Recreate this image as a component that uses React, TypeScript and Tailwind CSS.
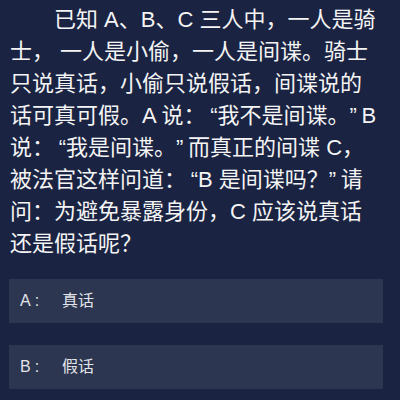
import React from 'react';

// Curly quotes get a fixed cell so spacing matches the screenshot.
const L = () => <span className="inline-block w-[12px] text-right">“</span>;
const R = () => <span className="inline-block w-[12px] text-left">”</span>;

const lines: React.ReactNode[] = [
  <>已知 A、B、C 三人中，一人是骑</>,
  <>士， 一人是小偷，一人是间谍。骑士</>,
  <>只说真话，小偷只说假话，间谍说的</>,
  <>话可真可假。A 说：<L />我不是间谍。<R />B</>,
  <>说：<L />我是间谍。<R />而真正的间谍 C，</>,
  <>被法官这样问道：<L />B 是间谍吗？<R />请</>,
  <>问：为避免暴露身份，C 应该说真话</>,
  <>还是假话呢？</>,
];

const options = [
  { key: 'A', text: '真话' },
  { key: 'B', text: '假话' },
];

export default function App() {
  return (
    <div
      lang="zh-CN"
      className="w-[400px] h-[400px] overflow-hidden bg-[#1a2342] font-['Liberation_Sans','Noto_Sans_CJK_SC',sans-serif]"
    >
      <div className="pl-[10px] pt-[4px] text-[22px] leading-[32px] text-[#f4f4f4] whitespace-nowrap">
        {lines.map((l, i) => (
          <div key={i} className={i === 0 ? 'pl-[44px]' : ''}>
            {l}
          </div>
        ))}
      </div>
      <div className="mt-[19px] flex flex-col gap-[22px] pl-[9px]">
        {options.map((o) => (
          <div
            key={o.key}
            className="w-[374px] h-[44px] bg-[#2c3650] flex items-center pl-[11px] text-[16px] text-[#e2e4e9]"
          >
            <span className="w-[42px]">
              {o.key}
              <span className="ml-[4px]">:</span>
            </span>
            <span>{o.text}</span>
          </div>
        ))}
      </div>
    </div>
  );
}
